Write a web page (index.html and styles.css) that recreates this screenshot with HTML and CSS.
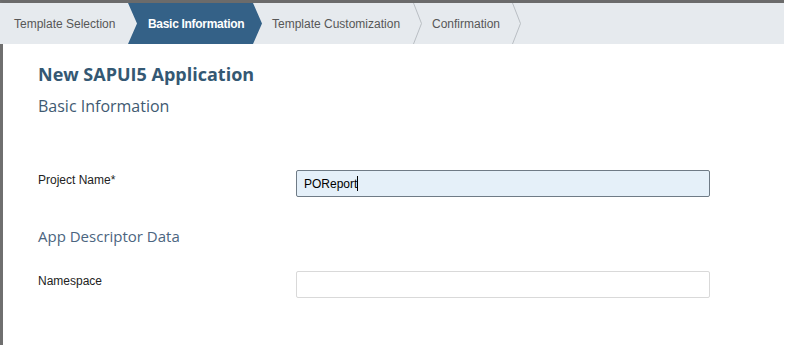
FILE: index.html
```html
<!DOCTYPE html>
<html lang="en">
<head>
  <meta charset="UTF-8">
  <title>New SAPUI5 Application</title>
  <link rel="stylesheet" href="styles.css">
</head>
<body>
  <div class="frame">
    <!-- Wizard steps -->
    <div class="steps">
      <div class="step first">Template Selection</div>
      <div class="step active">Basic Information</div>
      <div class="step third">Template Customization</div>
      <svg class="sep" width="9" height="41" viewBox="0 0 9 41"><polyline points="0.5,0 8.5,20.5 0.5,41" fill="none" stroke="#b9bec3" stroke-width="1"/></svg>
      <div class="step fourth">Confirmation</div>
      <svg class="sep" width="9" height="41" viewBox="0 0 9 41"><polyline points="0.5,0 8.5,20.5 0.5,41" fill="none" stroke="#b9bec3" stroke-width="1"/></svg>
    </div>

    <div class="content">
      <h1 class="title">New SAPUI5 Application</h1>
      <h2 class="subtitle">Basic Information</h2>

      <div class="form-row first-row">
        <label class="label" for="project">Project Name*</label>
        <div class="field focused"><span class="value">POReport</span><span class="caret"></span></div>
      </div>

      <h3 class="group">App Descriptor Data</h3>

      <div class="form-row">
        <label class="label" for="ns">Namespace</label>
        <div class="field"></div>
      </div>
    </div>
  </div>
</body>
</html>
```

FILE: styles.css
```css
html, body {
  margin: 0;
  padding: 0;
  background: #ffffff;
  height: 100%;
  overflow: hidden;
}

.frame {
  width: 781px;
  height: 100%;
  border-top: 3px solid #6b6b6b;
  border-left: 3px solid #6f6f6f;
  box-sizing: content-box;
}

/* Wizard steps */
.steps {
  display: flex;
  height: 41px;
  background: #e6eaee;
  margin-left: -3px;
  font-family: Arial, "Liberation Sans", sans-serif;
  font-size: 12px;
  color: #575757;
}

.step {
  display: flex;
  align-items: center;
  flex: none;
  box-sizing: border-box;
  padding-left: 10px;
  white-space: nowrap;
  overflow: hidden;
}

.step.first {
  width: 128px;
  padding-left: 14px;
}

.step.active {
  width: 134px;
  padding-left: 20px;
  background: #346187;
  color: #ffffff;
  font-weight: bold;
  letter-spacing: -0.3px;
  clip-path: polygon(0 0, calc(100% - 9px) 0, 100% 50%, calc(100% - 9px) 100%, 0 100%, 9px 50%);
}

.step.third {
  width: 151px;
}

.step.fourth {
  width: 90px;
}

.sep {
  display: block;
  flex: none;
}

/* Content */
.content {
  padding: 18px 0 0 35px;
  font-family: Arial, "Liberation Sans", sans-serif;
}

.title {
  margin: 0;
  font-family: "Open Sans", sans-serif;
  font-size: 18px;
  font-weight: bold;
  color: #345873;
  line-height: 24px;
}

.subtitle {
  margin: 8px 0 0;
  font-family: "Open Sans", sans-serif;
  font-size: 16px;
  font-weight: normal;
  color: #3f5a72;
  line-height: 24px;
}

.form-row {
  display: grid;
  grid-template-columns: 258px 414px;
  align-items: center;
}

.first-row {
  margin-top: 52px;
}

.label {
  font-size: 12px;
  color: #222222;
  margin-top: -8px;
}

.field {
  height: 27px;
  box-sizing: border-box;
  border: 1px solid #d9d9d9;
  border-radius: 2px;
  background: #ffffff;
  display: flex;
  align-items: center;
  padding-left: 7px;
  font-size: 12px;
  color: #000000;
}

.field.focused {
  background: #e5f0f9;
  border-color: #6f7b86;
}

.caret {
  width: 1px;
  height: 15px;
  background: #000000;
}

.group {
  margin: 29px 0 25px;
  font-family: "Open Sans", sans-serif;
  font-size: 15px;
  font-weight: normal;
  color: #4b6580;
  line-height: 20px;
}
```
